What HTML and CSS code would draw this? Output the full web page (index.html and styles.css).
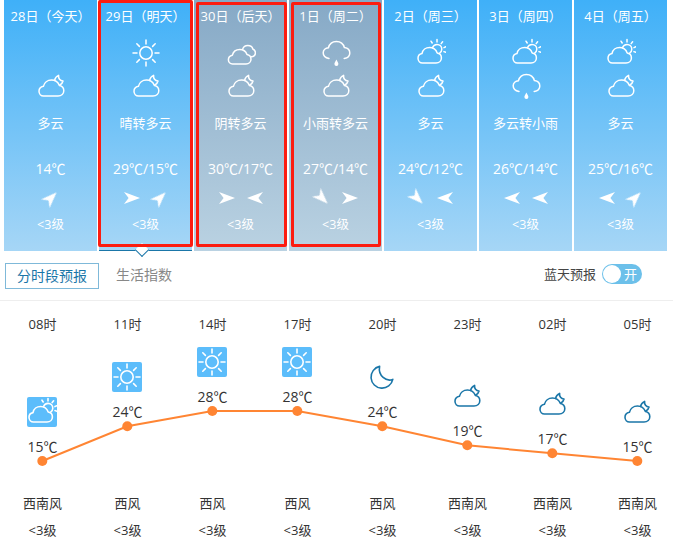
FILE: index.html
```html
<!DOCTYPE html>
<html lang="zh-CN">
<head>
<meta charset="utf-8">
<title>天气预报</title>
<link rel="stylesheet" href="styles.css">
</head>
<body>
<svg class="defs" width="0" height="0" aria-hidden="true">
  <defs>
    <symbol id="i-sun" viewBox="0 0 30 30">
      <circle cx="15" cy="15" r="6.2"/>
      <path d="M15 2v4M15 24v4M2 15h4M24 15h4M5.8 5.8l2.6 2.6M21.6 21.6l2.6 2.6M5.8 24.2l2.6-2.6M21.6 8.4l2.6-2.6"/>
    </symbol>
    <symbol id="i-cloudmoon" viewBox="0 0 30 30">
      <path d="M7.5 25H22C25.5 25 27.8 22.6 27.8 19.8C27.8 17 26 15 23.4 14.5C22 11 19 9 15.5 9C11.5 9 8.2 11.6 7.4 15.3C4.8 15.8 3 18 3 20.3C3 23 5 25 7.5 25Z"/>
      <path d="M18.6 9.4C19 7 20.6 5.2 22.6 4.4C22.2 7.4 24 10 27 10C26.6 11.8 25.4 13.2 23.8 14"/>
    </symbol>
    <symbol id="i-overcast" viewBox="0 0 30 30">
      <path d="M6.5 26H20C23 26 25 23.8 25 21.3C25 18.8 23.4 17 21 16.5C19.8 13.2 17 11.5 13.8 11.5C10.2 11.5 7.2 13.8 6.4 17.2C4 17.7 2.4 19.6 2.4 21.8C2.4 24.2 4.2 26 6.5 26Z"/>
      <path d="M16.5 11.4C17.4 9 19.5 7.6 21.8 7.6C24.6 7.6 26.4 9.2 26.8 11C28.4 11.6 29.4 13 29.4 14.8C29.4 17 27.8 18.6 25.4 18.8"/>
    </symbol>
    <symbol id="i-cloudsun" viewBox="0 0 30 30">
      <path d="M6.5 25H20C23.2 25 25.4 22.7 25.4 20C25.4 17.4 23.6 15.4 21.2 15C19.9 11.4 17 9.5 13.6 9.5C9.8 9.5 6.7 12 6 15.6C3.6 16.1 2 18 2 20.3C2 23 4 25 6.5 25Z"/>
      <path d="M16.4 9.7C17.2 7.6 19 6.4 21 6.4C23.8 6.4 25.8 8.6 25.8 11.2C25.8 13 24.8 14.6 23.2 15.6"/>
      <path d="M21 1.6V4M26.6 3.8L25.2 5.6M29.8 8.8L28 9.6M29.8 14.2L28 13.6M15 3.2L16.2 5"/>
    </symbol>
    <symbol id="i-rain" viewBox="0 0 30 30">
      <path d="M8 20.5C5 20 2.2 18 2.2 14.8C2.2 12 4.6 10 7.4 9.7C8.4 6 11.4 3.4 15.4 3.4C19.4 3.4 22.5 6 23.4 9.6C26.2 10 28.8 12 28.8 15C28.8 18 26.4 20 23.2 20.5"/>
      <path class="fill" d="M15.4 21.6C14.6 23.6 13.4 24.6 13.4 26A2 2 0 0 0 17.4 26C17.4 24.6 16.2 23.6 15.4 21.6Z"/>
    </symbol>
    <symbol id="i-moon" viewBox="0 0 30 30">
      <path d="M12.6 4.4A11 11 0 1 0 25.8 17.4C19.4 20 10.8 13.8 12.6 4.4Z"/>
    </symbol>
    <symbol id="i-wind" viewBox="0 0 18 18">
      <path class="fill solid" d="M17 9L1 3L5.6 9L1 15Z"/>
    </symbol>
  </defs>
</svg>

<section class="days">
  <article class="card">
    <div class="date">28日（今天）</div>
    <div class="icon-slot"></div>
    <svg class="icon second"><use href="#i-cloudmoon"/></svg>
    <div class="desc">多云</div>
    <div class="temp">14℃</div>
    <div class="winds"><svg class="wind up-right"><use href="#i-wind"/></svg></div>
    <div class="level">&lt;3级</div>
  </article>
  <article class="card selected mark-a">
    <div class="date">29日（明天）</div>
    <svg class="icon"><use href="#i-sun"/></svg>
    <svg class="icon second"><use href="#i-cloudmoon"/></svg>
    <div class="desc">晴转多云</div>
    <div class="temp">29℃/15℃</div>
    <div class="winds"><svg class="wind"><use href="#i-wind"/></svg><svg class="wind up-right"><use href="#i-wind"/></svg></div>
    <div class="level">&lt;3级</div>
    <span class="notch"></span>
  </article>
  <article class="card dim mark-b">
    <div class="date">30日（后天）</div>
    <svg class="icon"><use href="#i-overcast"/></svg>
    <svg class="icon second"><use href="#i-cloudmoon"/></svg>
    <div class="desc">阴转多云</div>
    <div class="temp">30℃/17℃</div>
    <div class="winds"><svg class="wind"><use href="#i-wind"/></svg><svg class="wind left"><use href="#i-wind"/></svg></div>
    <div class="level">&lt;3级</div>
  </article>
  <article class="card dim mark-c">
    <div class="date">1日（周二）</div>
    <svg class="icon"><use href="#i-rain"/></svg>
    <svg class="icon second"><use href="#i-cloudmoon"/></svg>
    <div class="desc">小雨转多云</div>
    <div class="temp">27℃/14℃</div>
    <div class="winds"><svg class="wind down-right"><use href="#i-wind"/></svg><svg class="wind"><use href="#i-wind"/></svg></div>
    <div class="level">&lt;3级</div>
  </article>
  <article class="card">
    <div class="date">2日（周三）</div>
    <svg class="icon"><use href="#i-cloudsun"/></svg>
    <svg class="icon second"><use href="#i-cloudmoon"/></svg>
    <div class="desc">多云</div>
    <div class="temp">24℃/12℃</div>
    <div class="winds"><svg class="wind down-right"><use href="#i-wind"/></svg><svg class="wind left"><use href="#i-wind"/></svg></div>
    <div class="level">&lt;3级</div>
  </article>
  <article class="card">
    <div class="date">3日（周四）</div>
    <svg class="icon"><use href="#i-cloudsun"/></svg>
    <svg class="icon second"><use href="#i-rain"/></svg>
    <div class="desc">多云转小雨</div>
    <div class="temp">26℃/14℃</div>
    <div class="winds"><svg class="wind left"><use href="#i-wind"/></svg><svg class="wind left"><use href="#i-wind"/></svg></div>
    <div class="level">&lt;3级</div>
  </article>
  <article class="card">
    <div class="date">4日（周五）</div>
    <svg class="icon"><use href="#i-cloudsun"/></svg>
    <svg class="icon second"><use href="#i-cloudmoon"/></svg>
    <div class="desc">多云</div>
    <div class="temp">25℃/16℃</div>
    <div class="winds"><svg class="wind left"><use href="#i-wind"/></svg><svg class="wind up-right"><use href="#i-wind"/></svg></div>
    <div class="level">&lt;3级</div>
  </article>
</section>

<nav class="tabs">
  <span class="tab active">分时段预报</span>
  <span class="tab">生活指数</span>
  <span class="blue-label">蓝天预报</span>
  <span class="toggle"><i class="knob"></i><b class="toggle-text">开</b></span>
</nav>

<section class="hours">
  <svg class="line" viewBox="0 0 673 252" width="673" height="252" aria-hidden="true">
    <polyline points="42.3,160 127.3,125.3 212.3,110 297.3,110 382.3,125.3 467.3,144.3 552.3,152.3 637.3,160"/>
    <circle cx="42.3" cy="160" r="5"/><circle cx="127.3" cy="125.3" r="5"/><circle cx="212.3" cy="110" r="5"/><circle cx="297.3" cy="110" r="5"/><circle cx="382.3" cy="125.3" r="5"/><circle cx="467.3" cy="144.3" r="5"/><circle cx="552.3" cy="152.3" r="5"/><circle cx="637.3" cy="160" r="5"/>
  </svg>
  <div class="hour"><div class="time">08时</div><div class="plot" style="padding-top:64px"><svg class="h-icon tile"><use href="#i-cloudsun"/></svg><div class="h-temp">15℃</div></div><div class="h-wind">西南风</div><div class="h-level">&lt;3级</div></div>
  <div class="hour"><div class="time">11时</div><div class="plot" style="padding-top:29px"><svg class="h-icon tile"><use href="#i-sun"/></svg><div class="h-temp">24℃</div></div><div class="h-wind">西风</div><div class="h-level">&lt;3级</div></div>
  <div class="hour"><div class="time">14时</div><div class="plot" style="padding-top:14px"><svg class="h-icon tile"><use href="#i-sun"/></svg><div class="h-temp">28℃</div></div><div class="h-wind">西风</div><div class="h-level">&lt;3级</div></div>
  <div class="hour"><div class="time">17时</div><div class="plot" style="padding-top:14px"><svg class="h-icon tile"><use href="#i-sun"/></svg><div class="h-temp">28℃</div></div><div class="h-wind">西风</div><div class="h-level">&lt;3级</div></div>
  <div class="hour"><div class="time">20时</div><div class="plot" style="padding-top:29px"><svg class="h-icon"><use href="#i-moon"/></svg><div class="h-temp">24℃</div></div><div class="h-wind">西风</div><div class="h-level">&lt;3级</div></div>
  <div class="hour"><div class="time">23时</div><div class="plot" style="padding-top:48px"><svg class="h-icon"><use href="#i-cloudmoon"/></svg><div class="h-temp">19℃</div></div><div class="h-wind">西南风</div><div class="h-level">&lt;3级</div></div>
  <div class="hour"><div class="time">02时</div><div class="plot" style="padding-top:56px"><svg class="h-icon"><use href="#i-cloudmoon"/></svg><div class="h-temp">17℃</div></div><div class="h-wind">西南风</div><div class="h-level">&lt;3级</div></div>
  <div class="hour"><div class="time">05时</div><div class="plot" style="padding-top:64px"><svg class="h-icon"><use href="#i-cloudmoon"/></svg><div class="h-temp">15℃</div></div><div class="h-wind">西南风</div><div class="h-level">&lt;3级</div></div>
</section>
</body>
</html>
```
FILE: styles.css
```css
* { box-sizing: border-box; }
html, body { margin: 0; padding: 0; background: #fff; }
body {
  width: 673px;
  height: 553px;
  overflow: hidden;
  font-family: "Open Sans", "Noto Sans CJK SC", sans-serif;
  font-size: 13px;
  color: #333;
}
.defs { position: absolute; }
symbol { overflow: visible; }

.days { display: flex; gap: 2px; padding-left: 4px; height: 251px; }
.card {
  position: relative;
  width: 93px;
  display: flex;
  flex-direction: column;
  align-items: center;
  color: #fff;
  fill: none;
  stroke: #fff;
  stroke-width: 1.5;
  stroke-linecap: round;
  stroke-linejoin: round;
  padding-top: 6px;
  background: linear-gradient(#3fb0f8, #a6d6f6);
}
.card.dim { background: linear-gradient(#86a9c6, #bad2e2); }
.date, .desc, .temp, .level { line-height: 20px; white-space: nowrap; stroke: none; }
.date { height: 20px; }
.icon, .icon-slot { width: 30px; height: 30px; margin-top: 12px; display: block; }
.icon.second { margin-top: 3px; }
.desc { margin-top: 12px; }
.temp { margin-top: 26px; font-size: 14px; }
.winds { display: flex; gap: 10px; margin-top: 10px; height: 18px; }
.wind { width: 18px; height: 18px; display: block; filter: blur(0.3px); }
.wind.up-right { transform: rotate(-45deg); }
.wind.down-right { transform: rotate(45deg); }
.wind.left { transform: rotate(180deg); }
.level { margin-top: 8px; font-size: 12.5px; }
.fill { fill: currentColor; stroke: none; }
.card .fill { fill: #fff; }
.solid { fill: #fff; }

.card.selected { border-bottom: 1px solid #1a76a8; }
.notch {
  position: absolute;
  left: 38px;
  top: 245px;
  width: 10px;
  height: 10px;
  background: #fff;
  border-right: 1.5px solid #1a76a8;
  border-bottom: 1.5px solid #1a76a8;
  transform: rotate(45deg);
}
.mark-a::after, .mark-b::after, .mark-c::after {
  content: "";
  position: absolute;
  border: 3px solid #fc1c10;
  border-radius: 2px;
  pointer-events: none;
}
.mark-a::after { inset: 0 -1px 3px -1px; }
.mark-b::after { inset: 2px 0 4px 2px; }
.mark-c::after { inset: 2px 1px 4px 2px; }

.tabs {
  display: flex;
  align-items: flex-start;
  height: 50px;
  padding: 12px 31px 0 5px;
  border-bottom: 1px solid #eee;
}
.tab { height: 26px; line-height: 24px; font-size: 14px; color: #888; margin-left: 17px; white-space: nowrap; }
.tab.active {
  width: 94px;
  margin-left: 0;
  text-align: center;
  color: #1a76a8;
  border: 1px solid #7fb9d9;
}
.blue-label { margin-left: auto; line-height: 20px; height: 20px; margin-top: 1px; color: #444; white-space: nowrap; }
.toggle {
  display: flex;
  align-items: center;
  width: 40px;
  height: 20px;
  margin-left: 6px;
  margin-top: 1px;
  padding-left: 1px;
  border-radius: 10px;
  background: #6cc0ea;
}
.knob { width: 18px; height: 18px; border-radius: 50%; background: #fff; display: block; }
.toggle-text { margin-left: 3px; font-weight: 400; color: #fff; line-height: 20px; }

.hours { position: relative; display: flex; width: 673px; height: 252px; overflow: hidden; }
.line { position: absolute; left: 0; top: 0; fill: #ff8533; }
.line polyline { fill: none; stroke: #ff8533; stroke-width: 2; }
.hour { flex: 0 0 85px; display: flex; flex-direction: column; align-items: center; padding-top: 14px; position: relative; }
.time { line-height: 18px; height: 18px; }
.plot { height: 160px; display: flex; flex-direction: column; align-items: center; }
.h-icon {
  width: 30px;
  height: 30px;
  display: block;
  fill: none;
  stroke: #1a76a8;
  stroke-width: 1.6;
  stroke-linecap: round;
  stroke-linejoin: round;
}
.h-icon.tile { background: #5cbdfb; border-radius: 2px; stroke: #fff; fill: none; color: #fff; }
.h-temp { margin-top: 11px; line-height: 18px; font-size: 14px; }
.h-wind { line-height: 20px; white-space: nowrap; }
.h-level { margin-top: 7px; line-height: 20px; }
```
